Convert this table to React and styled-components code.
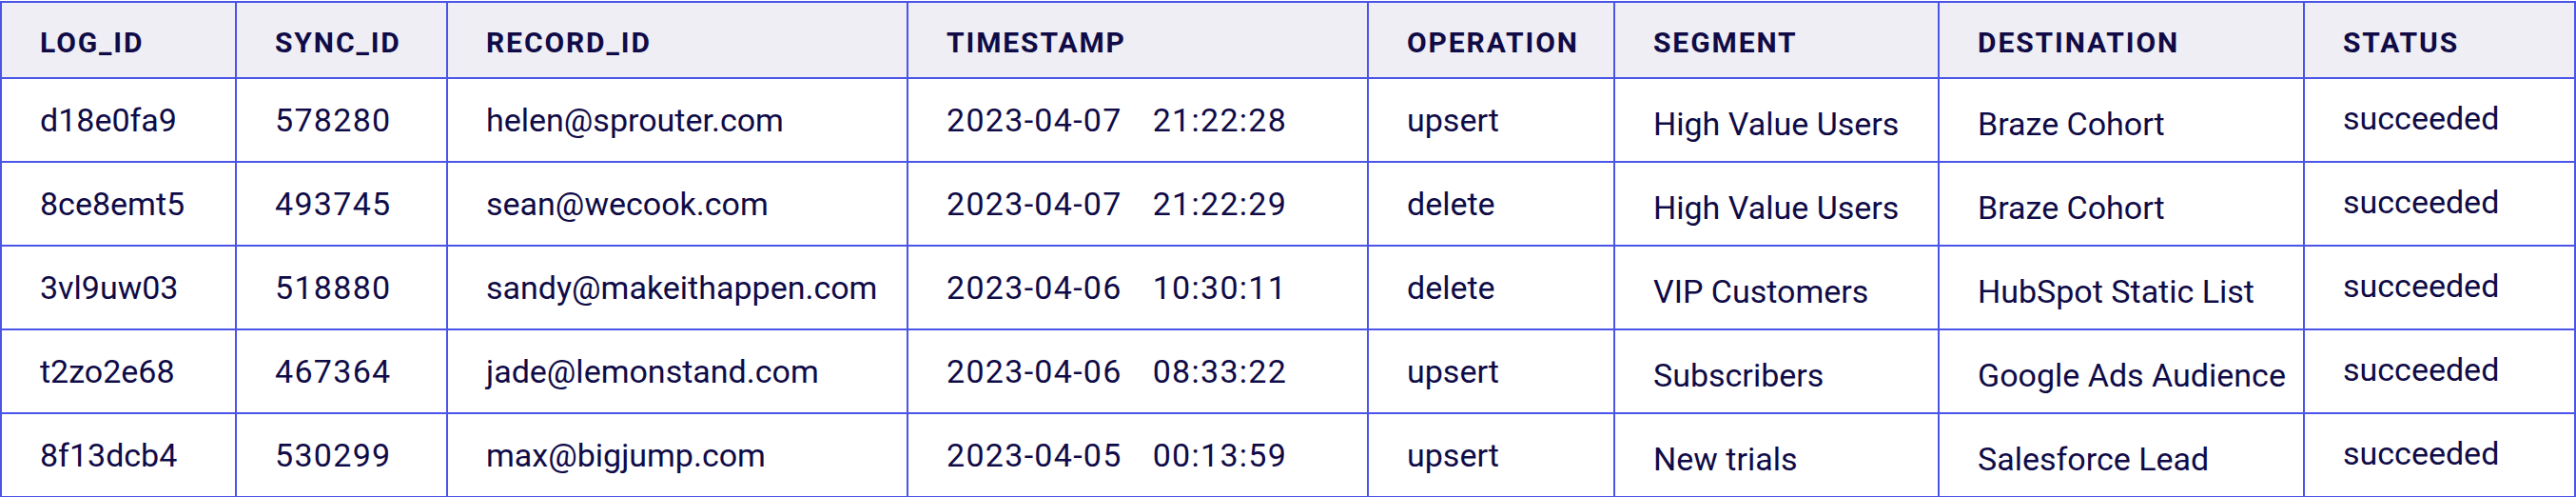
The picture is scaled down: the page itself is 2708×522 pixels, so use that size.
import React from 'react';
import styled, { createGlobalStyle } from 'styled-components';

const GlobalStyle = createGlobalStyle`
  html, body {
    margin: 0;
    padding: 0;
    background: #ffffff;
  }
  body {
    font-family: Roboto, 'Liberation Sans', sans-serif;
    color: #0f0b47;
  }
`;

// tone: 'low' sits a little lower in its cell, 'high' a little higher
const columns = [
  { key: 'logId', label: 'LOG_ID', width: 247 },
  { key: 'syncId', label: 'SYNC_ID', width: 222, numeric: true },
  { key: 'recordId', label: 'RECORD_ID', width: 484 },
  { key: 'timestamp', label: 'TIMESTAMP', width: 484, numeric: true },
  { key: 'operation', label: 'OPERATION', width: 259 },
  { key: 'segment', label: 'SEGMENT', width: 341, tone: 'low' },
  { key: 'destination', label: 'DESTINATION', width: 384, tone: 'low' },
  { key: 'status', label: 'STATUS', width: 285, tone: 'high' },
];

const logs = [
  {
    logId: 'd18e0fa9',
    syncId: '578280',
    recordId: 'helen@sprouter.com',
    date: '2023-04-07',
    time: '21:22:28',
    operation: 'upsert',
    segment: 'High Value Users',
    destination: 'Braze Cohort',
    status: 'succeeded',
  },
  {
    logId: '8ce8emt5',
    syncId: '493745',
    recordId: 'sean@wecook.com',
    date: '2023-04-07',
    time: '21:22:29',
    operation: 'delete',
    segment: 'High Value Users',
    destination: 'Braze Cohort',
    status: 'succeeded',
  },
  {
    logId: '3vl9uw03',
    syncId: '518880',
    recordId: 'sandy@makeithappen.com',
    date: '2023-04-06',
    time: '10:30:11',
    operation: 'delete',
    segment: 'VIP Customers',
    destination: 'HubSpot Static List',
    status: 'succeeded',
  },
  {
    logId: 't2zo2e68',
    syncId: '467364',
    recordId: 'jade@lemonstand.com',
    date: '2023-04-06',
    time: '08:33:22',
    operation: 'upsert',
    segment: 'Subscribers',
    destination: 'Google Ads Audience',
    status: 'succeeded',
  },
  {
    logId: '8f13dcb4',
    syncId: '530299',
    recordId: 'max@bigjump.com',
    date: '2023-04-05',
    time: '00:13:59',
    operation: 'upsert',
    segment: 'New trials',
    destination: 'Salesforce Lead',
    status: 'succeeded',
  },
];

export default function App() {
  return (
    <>
      <GlobalStyle />
      <Table>
        <colgroup>
          {columns.map((col) => (
            <col key={col.key} style={{ width: col.width }} />
          ))}
        </colgroup>
        <thead>
          <tr>
            {columns.map((col) => (
              <HeadCell key={col.key}>{col.label}</HeadCell>
            ))}
          </tr>
        </thead>
        <tbody>
          {logs.map((log) => (
            <Row key={log.logId}>
              {columns.map((col) => (
                <Cell key={col.key} $tone={col.tone} $numeric={col.numeric}>
                  {col.key === 'timestamp' ? (
                    <>
                      <span>{log.date}</span>
                      <Time>{log.time}</Time>
                    </>
                  ) : (
                    log[col.key]
                  )}
                </Cell>
              ))}
            </Row>
          ))}
        </tbody>
      </Table>
    </>
  );
}

const Table = styled.table`
  width: 2708px;
  margin-top: 1px;
  table-layout: fixed;
  border-collapse: separate;
  border-spacing: 0;
  border-top: 2px solid #4a55e8;
  border-left: 2px solid #4a55e8;
`;

const HeadCell = styled.th`
  height: 80px;
  padding: 4px 40px 0;
  box-sizing: border-box;
  text-align: left;
  vertical-align: middle;
  background: #efeef4;
  border-right: 2px solid #4a55e8;
  border-bottom: 2px solid #4a55e8;
  font-size: 30px;
  font-weight: 700;
  letter-spacing: 1.9px;
  color: #0f0b47;
  white-space: nowrap;
`;

const Row = styled.tr`
  height: 88px;
`;

const Cell = styled.td`
  padding: ${({ $tone }) =>
    $tone === 'high' ? '0 40px 4px' : $tone === 'low' ? '7px 40px 0' : '0 40px'};
  text-align: left;
  vertical-align: middle;
  border-right: 2px solid #4a55e8;
  border-bottom: 2px solid #4a55e8;
  font-size: 34px;
  font-weight: 400;
  letter-spacing: ${({ $numeric }) => ($numeric ? '1.3px' : '0')};
  color: #0f0b47;
  white-space: nowrap;
`;

const Time = styled.span`
  margin-left: 32px;
`;
